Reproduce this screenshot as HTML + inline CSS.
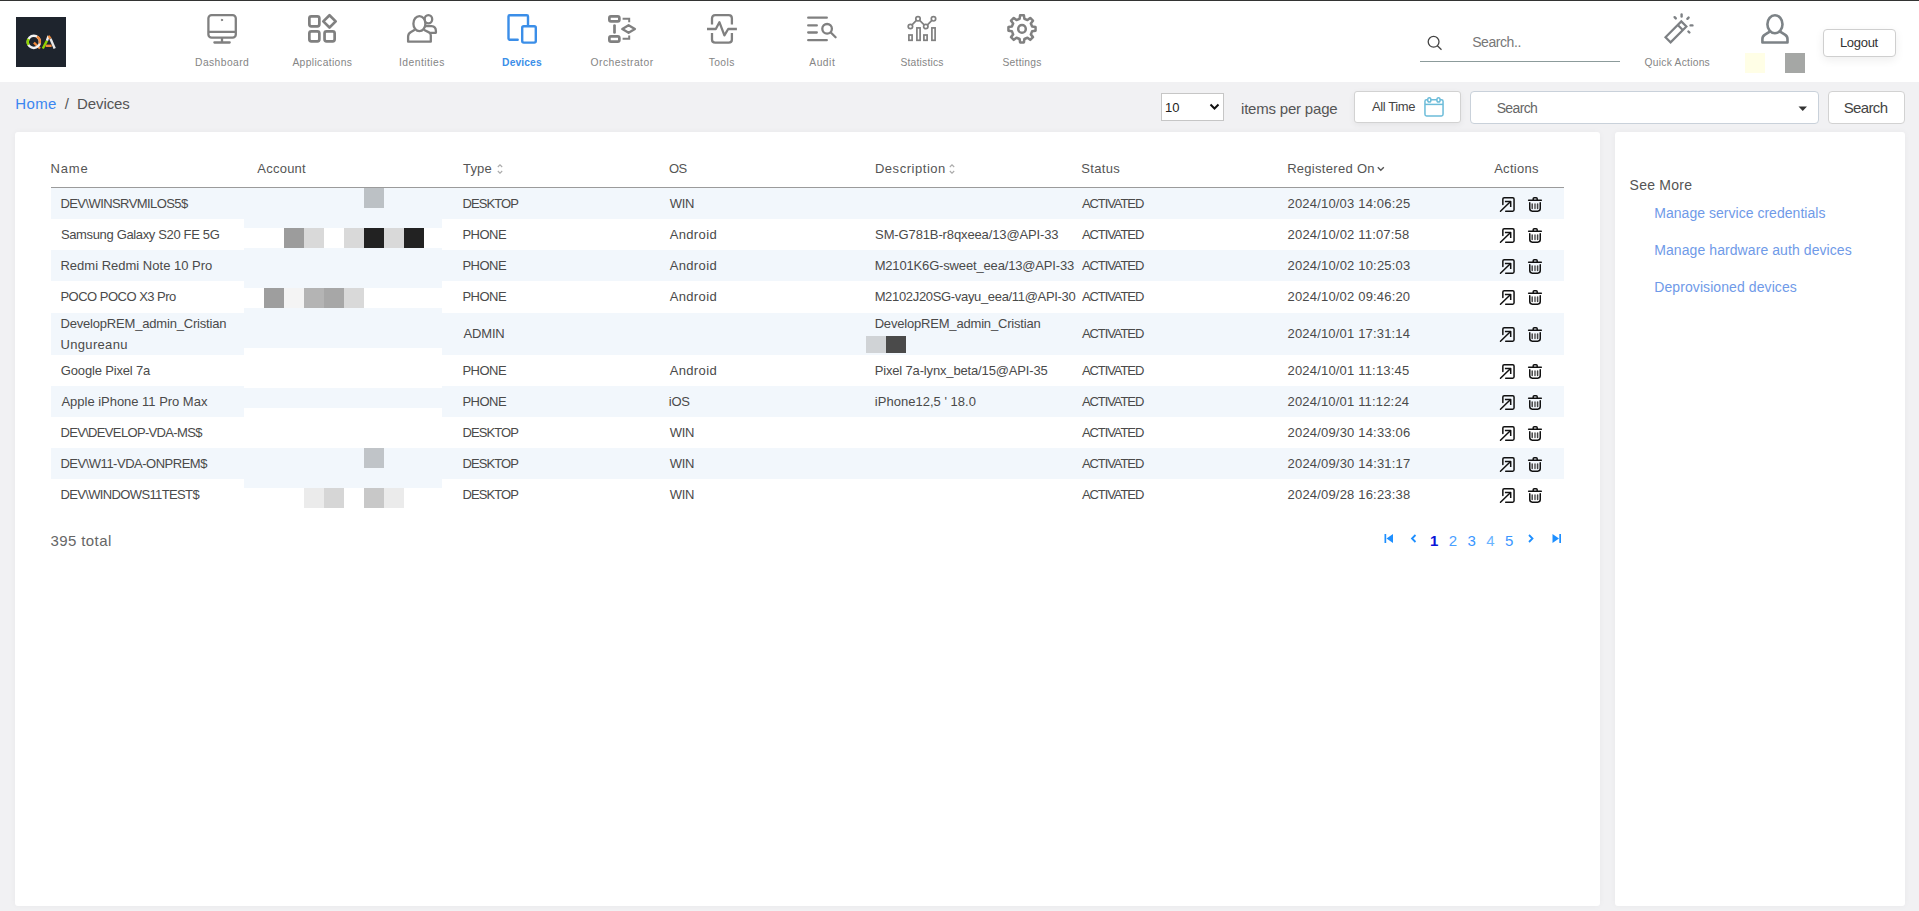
<!DOCTYPE html>
<html><head><meta charset="utf-8"><title>Devices</title>
<style>
*{box-sizing:border-box;margin:0;padding:0}
html,body{width:1919px;height:911px;overflow:hidden}
body{background:#f1f1f3;font-family:"Liberation Sans",sans-serif;position:relative}
.a{position:absolute}
.t{position:absolute;white-space:nowrap;line-height:1}
svg{position:absolute;overflow:visible}
</style></head><body>

<div class="a" style="left:0;top:0;width:1919px;height:82px;background:#fff"></div>
<div class="a" style="left:0;top:0;width:1919px;height:1px;background:#333433"></div>
<div class="a" style="left:16px;top:17px;width:50px;height:50px;background:#1e242d"></div>
<svg style="left:16px;top:17px" width="50" height="50" viewBox="0 0 50 50">
<g fill="none" stroke-width="2.4" stroke-linecap="butt">
<path d="M17.9 25.7 L24 31.5" stroke="#f08a3c"/>
<circle cx="17.8" cy="24.9" r="6.1" stroke="#f2f2f2"/>
<path d="M12.52 21.85 A6.1 6.1 0 0 0 12.52 27.95" stroke="#8fd400"/>
<path d="M20.85 19.62 A6.1 6.1 0 0 1 23.69 26.48" stroke="#f08a3c"/>
<path d="M26.8 31.5 L31 23.6" stroke="#8fd400"/>
<path d="M31 23.6 L32.6 18.8" stroke="#f2f2f2"/>
<path d="M32.6 18.8 L34.5 21.7" stroke="#f08a3c"/>
<path d="M34.5 21.7 L38.7 31.5" stroke="#e8e8e8"/>
<path d="M29.7 28.8 L35.6 28.8" stroke="#f08a3c"/>
</g></svg>
<svg style="left:222px;top:13px" width="1" height="1"><g fill="none" stroke="#808080" stroke-width="2.3" stroke-linecap="round"><rect x="-13.6" y="2.1" width="27.4" height="22.6" rx="3.2"/><line x1="-13" y1="18.9" x2="13" y2="18.9"/><line x1="0" y1="25.5" x2="0" y2="28.8"/><line x1="-7.6" y1="29.5" x2="7.7" y2="29.5"/><circle cx="-0.1" cy="7" r="0.7" fill="#808080" stroke-width="1"/></g></svg>
<div class="t" style="left:195.06px;top:57.88px;font-size:10.3px;color:#858585;letter-spacing:0.415px;font-weight:normal;">Dashboard</div>
<svg style="left:322px;top:13px" width="1" height="1"><g fill="none" stroke="#808080" stroke-width="2.7" stroke-linejoin="round"><rect x="-12.65" y="3.35" width="10" height="10" rx="2"/><rect x="-12.65" y="18.35" width="10" height="10" rx="2"/><rect x="2.55" y="18.35" width="10.1" height="10" rx="2"/><path d="M7.5 2.2 L13.7 8.35 L7.5 14.5 L1.3 8.35 Z"/></g></svg>
<div class="t" style="left:292.38px;top:57.88px;font-size:10.3px;color:#858585;letter-spacing:0.369px;font-weight:normal;">Applications</div>
<svg style="left:422px;top:13px" width="1" height="1"><g stroke="#808080" stroke-width="2.3" stroke-linejoin="round" fill="#fff"><ellipse cx="6.4" cy="6.2" rx="3.8" ry="4.1"/><path d="M2 13.2 L9.5 13.2 Q13.9 13.6 13.9 18 L13.9 19.8 L3 19.8"/><path d="M-7.2 16.8 L-11 18.9 Q-13.9 20.5 -13.9 23.5 L-13.9 28.7 L8.8 28.7 L8.8 22.2 Q8.8 20.4 7 19.4 L1.8 16.8"/><ellipse cx="-2.6" cy="10.65" rx="6" ry="7.55"/></g></svg>
<div class="t" style="left:398.95px;top:57.88px;font-size:10.3px;color:#858585;letter-spacing:0.478px;font-weight:normal;">Identities</div>
<svg style="left:522px;top:13px" width="1" height="1"><g fill="none" stroke="#3b8ee8" stroke-width="2.4" stroke-linecap="round" stroke-linejoin="round"><path d="M-4.3 26.8 L-12.3 26.8 Q-13.5 26.8 -13.5 25.6 L-13.5 3.4 Q-13.5 2.2 -12.3 2.2 L4.8 2.2 Q6 2.2 6 3.4 L6 12.8"/><rect x="0.2" y="13.2" width="13.6" height="16.4" rx="1.6"/></g></svg>
<div class="t" style="left:502.11px;top:57.88px;font-size:10.3px;color:#3b8ee8;letter-spacing:0.095px;font-weight:bold;">Devices</div>
<svg style="left:622px;top:13px" width="1" height="1"><g fill="none" stroke="#808080" stroke-width="2.7" stroke-linecap="round" stroke-linejoin="round"><rect x="-12.65" y="3.35" width="10" height="5.1" rx="1.6"/><rect x="-12.65" y="23.45" width="10" height="5.1" rx="1.6"/><line x1="-7.5" y1="12.6" x2="-7.5" y2="19.5"/><path d="M0.3 16 L6.6 12.3 L12.9 16 L6.6 19.7 Z" stroke-width="2.4"/><path d="M0.6 5.8 L7.2 5.8 L7.2 9.3" stroke-linecap="butt" stroke-linejoin="miter" stroke-width="2"/><path d="M0.6 25.8 L7.2 25.8 L7.2 22.4" stroke-linecap="butt" stroke-linejoin="miter" stroke-width="2"/></g></svg>
<div class="t" style="left:590.61px;top:57.88px;font-size:10.3px;color:#858585;letter-spacing:0.475px;font-weight:normal;">Orchestrator</div>
<svg style="left:722px;top:13px" width="1" height="1"><g fill="none" stroke="#808080" stroke-width="2.3" stroke-linejoin="round"><path d="M-10 11.6 L-10 5.4 Q-10 2.15 -6.8 2.15 L6.7 2.15 Q9.9 2.15 9.9 5.4 L9.9 11.6"/><path d="M-10 20 L-10 26.4 Q-10 29.65 -6.8 29.65 L6.7 29.65 Q9.9 29.65 9.9 26.4 L9.9 20"/><path d="M-15 16 L-6.2 16 L-2.6 9.2 L2.4 22.4 L6.2 16 L14.9 16"/></g></svg>
<div class="t" style="left:708.67px;top:57.88px;font-size:10.3px;color:#858585;letter-spacing:0.404px;font-weight:normal;">Tools</div>
<svg style="left:822px;top:13px" width="1" height="1"><g fill="none" stroke="#808080" stroke-width="2.3" stroke-linecap="round"><line x1="-13.8" y1="4.7" x2="4.8" y2="4.7"/><line x1="-13.8" y1="12.4" x2="-5.2" y2="12.4"/><line x1="-13.8" y1="19.5" x2="-5.2" y2="19.5"/><line x1="-13.8" y1="27.2" x2="4.8" y2="27.2"/><circle cx="5.1" cy="15.8" r="4.8"/><line x1="8.8" y1="19.5" x2="13.6" y2="24.3"/></g></svg>
<div class="t" style="left:809.28px;top:57.88px;font-size:10.3px;color:#858585;letter-spacing:0.505px;font-weight:normal;">Audit</div>
<svg style="left:922px;top:13px" width="1" height="1"><g fill="none" stroke="#808080" stroke-width="1.7"><rect x="-13.1" y="22" width="3.2" height="5.3"/><rect x="-5.1" y="14.9" width="3.2" height="12.4"/><rect x="1.9" y="22" width="3.2" height="5.3"/><rect x="9.9" y="14.9" width="3.2" height="12.4"/><circle cx="-11.6" cy="13.5" r="2.2"/><circle cx="-4" cy="5.8" r="2.2"/><circle cx="3.8" cy="13.5" r="2.2"/><circle cx="11.5" cy="5.8" r="2.2"/><path d="M-10.2 12.1 L-5.4 7.2 M-2.6 7.2 L2.4 12.1 M5.2 12.1 L10.1 7.2"/></g></svg>
<div class="t" style="left:900.43px;top:57.88px;font-size:10.3px;color:#858585;letter-spacing:0.203px;font-weight:normal;">Statistics</div>
<svg style="left:1022px;top:13px" width="1" height="1"><g fill="none" stroke="#808080" stroke-width="2.5" stroke-linejoin="round"><path d="M10.12 13.52 L13.56 13.97 L13.56 17.83 L10.12 18.28 L8.84 21.38 L10.96 24.13 L8.23 26.86 L5.48 24.74 L2.38 26.02 L1.93 29.46 L-1.93 29.46 L-2.38 26.02 L-5.48 24.74 L-8.23 26.86 L-10.96 24.13 L-8.84 21.38 L-10.12 18.28 L-13.56 17.83 L-13.56 13.97 L-10.12 13.52 L-8.84 10.42 L-10.96 7.67 L-8.23 4.94 L-5.48 7.06 L-2.38 5.78 L-1.93 2.34 L1.93 2.34 L2.38 5.78 L5.48 7.06 L8.23 4.94 L10.96 7.67 L8.84 10.42Z"/><circle cx="0" cy="15.9" r="3.8"/></g></svg>
<div class="t" style="left:1002.43px;top:57.88px;font-size:10.3px;color:#858585;letter-spacing:0.26px;font-weight:normal;">Settings</div>
<svg style="left:1427px;top:35px" width="16" height="16" viewBox="0 0 16 16"><circle cx="6.6" cy="6.8" r="5.4" fill="none" stroke="#444" stroke-width="1.3"/><line x1="10.4" y1="10.8" x2="14.5" y2="14.8" stroke="#444" stroke-width="1.3"/></svg>
<div class="t" style="left:1472.16px;top:35.35px;font-size:14px;color:#777;letter-spacing:-0.432px;font-weight:normal;">Search..</div>
<div class="a" style="left:1420px;top:60.5px;width:200px;height:1px;background:#8c9b9b"></div>
<svg style="left:1660px;top:10px" width="40" height="40" viewBox="0 0 40 40">
<g fill="none" stroke="#7d8084" stroke-width="2.2" stroke-linejoin="miter">
<path d="M5.5 27.3 L21.3 11.4 L26.4 16.5 L10.6 32.4 Z"/>
<line x1="17.8" y1="15" x2="22.8" y2="20"/>
</g>
<g stroke="#7d8084" stroke-width="2.4" stroke-linecap="round">
<line x1="21.6" y1="4.4" x2="21.6" y2="6.6"/>
<line x1="14.6" y1="7.2" x2="15.8" y2="8.4"/>
<line x1="28.6" y1="7.6" x2="27.4" y2="8.8"/>
<line x1="30.6" y1="15.4" x2="32.4" y2="15.4"/>
<line x1="28.4" y1="21.5" x2="29.4" y2="22.5"/>
</g></svg>
<div class="t" style="left:1644.51px;top:57.88px;font-size:10.3px;color:#858585;letter-spacing:0.241px;font-weight:normal;">Quick Actions</div>
<svg style="left:1760px;top:13px" width="32" height="32" viewBox="0 0 32 32">
<g fill="none" stroke="#7d8387" stroke-width="2.6" stroke-linejoin="round">
<path d="M10.2 18.4 L5 21.6 Q2.4 23.2 2.4 26 L2.4 29.5 L27.5 29.5 L27.5 26 Q27.5 23.2 24.9 21.6 L19.7 18.4"/>
<ellipse cx="14.95" cy="11.3" rx="7.55" ry="9"/>
</g></svg>
<div class="a" style="left:1745px;top:53px;width:20px;height:20px;background:#fffee6"></div>
<div class="a" style="left:1785px;top:53px;width:20px;height:20px;background:#a5a7a5"></div>
<div class="a" style="left:1823px;top:29px;width:73px;height:28px;background:#fff;border:1px solid #cfcfcf;border-radius:4px;box-shadow:0 3px 10px rgba(0,0,0,0.07)"></div>
<div class="t" style="left:1839.93px;top:36.00px;font-size:13px;color:#333;letter-spacing:-0.3px;font-weight:normal;">Logout</div>
<div class="t" style="left:15.27px;top:95.90px;font-size:15px;color:#3b86f0;letter-spacing:0.395px;font-weight:normal;">Home</div>
<div class="t" style="left:64.80px;top:95.90px;font-size:15px;color:#555;letter-spacing:0px;font-weight:normal;">/</div>
<div class="t" style="left:76.97px;top:95.90px;font-size:15px;color:#555;letter-spacing:-0.08px;font-weight:normal;">Devices</div>
<div class="a" style="left:1161px;top:93px;width:63px;height:28px;background:#fff;border:1px solid #c6c6c6"></div>
<div class="t" style="left:1165.01px;top:101.00px;font-size:13px;color:#222;letter-spacing:0px;font-weight:normal;">10</div>
<svg style="left:1209px;top:103px" width="12" height="8" viewBox="0 0 12 8"><path d="M1.5 1.5 L5.5 5.5 L9.5 1.5" fill="none" stroke="#111" stroke-width="2"/></svg>
<div class="t" style="left:1241.00px;top:100.80px;font-size:15px;color:#555;letter-spacing:-0.2px;font-weight:normal;">items per page</div>
<div class="a" style="left:1354px;top:91px;width:107px;height:32px;background:#fff;border:1px solid #d2d2d2;border-radius:3px;box-shadow:0 2px 6px rgba(0,0,0,0.06)"></div>
<div class="t" style="left:1371.97px;top:100.40px;font-size:13px;color:#444;letter-spacing:-0.4px;font-weight:normal;">All Time</div>
<svg style="left:1423px;top:96px" width="22" height="22" viewBox="0 0 22 22"><g fill="none" stroke="#6cbcd9" stroke-width="1.5"><rect x="1.95" y="3.65" width="18.1" height="16.3" rx="1.6"/><line x1="1.95" y1="8.4" x2="20.05" y2="8.4"/><ellipse cx="6.3" cy="3.9" rx="1.6" ry="2.2" fill="#fff"/><ellipse cx="15.5" cy="3.9" rx="1.6" ry="2.2" fill="#fff"/></g></svg>
<div class="a" style="left:1469.5px;top:91px;width:349px;height:32.5px;background:#fff;border:1px solid #c9d1da;border-radius:4px"></div>
<div class="t" style="left:1496.66px;top:101.45px;font-size:14px;color:#666;letter-spacing:-0.623px;font-weight:normal;">Search</div>
<svg style="left:1797.5px;top:106.2px" width="10" height="6" viewBox="0 0 10 6"><path d="M0.5 0.5 L9 0.5 L4.75 5 Z" fill="#333"/></svg>
<div class="a" style="left:1827.5px;top:91px;width:77px;height:32.5px;background:#fff;border:1px solid #d2d2d2;border-radius:4px"></div>
<div class="t" style="left:1843.72px;top:99.80px;font-size:15px;color:#444;letter-spacing:-0.654px;font-weight:normal;">Search</div>
<div class="a" style="left:15px;top:132px;width:1585px;height:774px;background:#fff;border-radius:3px;box-shadow:0 0 6px rgba(0,0,0,0.04)"></div>
<div class="a" style="left:1615px;top:132px;width:290px;height:774px;background:#fff;border-radius:3px;box-shadow:0 0 6px rgba(0,0,0,0.04)"></div>
<div class="t" style="left:50.43px;top:162.00px;font-size:13px;color:#555;letter-spacing:0.856px;font-weight:normal;">Name</div>
<div class="t" style="left:257.37px;top:162.00px;font-size:13px;color:#555;letter-spacing:0.225px;font-weight:normal;">Account</div>
<div class="t" style="left:463.01px;top:162.00px;font-size:13px;color:#555;letter-spacing:0.19px;font-weight:normal;">Type</div>
<div class="t" style="left:669.08px;top:162.00px;font-size:13px;color:#555;letter-spacing:-0.67px;font-weight:normal;">OS</div>
<div class="t" style="left:874.93px;top:162.00px;font-size:13px;color:#555;letter-spacing:0.539px;font-weight:normal;">Description</div>
<div class="t" style="left:1081.31px;top:162.00px;font-size:13px;color:#555;letter-spacing:0.301px;font-weight:normal;">Status</div>
<div class="t" style="left:1287.13px;top:162.00px;font-size:13px;color:#555;letter-spacing:0.299px;font-weight:normal;">Registered On</div>
<div class="t" style="left:1494.17px;top:162.00px;font-size:13px;color:#555;letter-spacing:0.277px;font-weight:normal;">Actions</div>
<svg style="left:497px;top:164px" width="6" height="10" viewBox="0 0 6 10"><path d="M0.8 3 L3 0.8 L5.2 3 M0.8 7 L3 9.2 L5.2 7" fill="none" stroke="#aaa" stroke-width="1.1"/></svg>
<svg style="left:949px;top:164px" width="6" height="10" viewBox="0 0 6 10"><path d="M0.8 3 L3 0.8 L5.2 3 M0.8 7 L3 9.2 L5.2 7" fill="none" stroke="#aaa" stroke-width="1.1"/></svg>
<svg style="left:1377px;top:166px" width="8" height="6" viewBox="0 0 8 6"><path d="M0.8 1.2 L3.8 4.2 L6.8 1.2" fill="none" stroke="#555" stroke-width="1.4"/></svg>
<div class="a" style="left:51px;top:187px;width:1513px;height:1px;background:#9b9b9b"></div>
<div class="a" style="left:51px;top:188px;width:1513px;height:31px;background:#f2f7fc"></div>
<div class="a" style="left:51px;top:250px;width:1513px;height:31px;background:#f2f7fc"></div>
<div class="a" style="left:51px;top:313px;width:1513px;height:42px;background:#f2f7fc"></div>
<div class="a" style="left:51px;top:386px;width:1513px;height:31px;background:#f2f7fc"></div>
<div class="a" style="left:51px;top:448px;width:1513px;height:31px;background:#f2f7fc"></div>
<div class="t" style="left:60.43px;top:197.00px;font-size:13px;color:#4a4a4a;letter-spacing:-0.58px;font-weight:normal;">DEV\WINSRVMILOS5$</div>
<div class="t" style="left:462.43px;top:197.00px;font-size:13px;color:#4a4a4a;letter-spacing:-0.895px;font-weight:normal;">DESKTOP</div>
<div class="t" style="left:669.64px;top:197.00px;font-size:13px;color:#4a4a4a;letter-spacing:-0.226px;font-weight:normal;">WIN</div>
<div class="t" style="left:1081.97px;top:197.00px;font-size:13px;color:#4a4a4a;letter-spacing:-1.088px;font-weight:normal;">ACTIVATED</div>
<div class="t" style="left:1287.55px;top:197.00px;font-size:13px;color:#4a4a4a;letter-spacing:0.184px;font-weight:normal;">2024/10/03 14:06:25</div>
<svg style="left:1499px;top:196px" width="17" height="17" viewBox="0 0 17 17"><g fill="none" stroke="#111" stroke-width="1.5" stroke-linecap="round" stroke-linejoin="round"><path d="M3.85 8.4 L3.85 3.1 Q3.85 1.75 5.2 1.75 L13.7 1.75 Q15.05 1.75 15.05 3.1 L15.05 13.8 Q15.05 15.15 13.7 15.15 L6.7 15.15"/><path d="M1.5 15.3 L11.3 5.8"/><path d="M5.9 5.4 L11.7 5.4 L11.7 11" stroke-linecap="butt"/></g></svg>
<svg style="left:1527px;top:196px" width="17" height="17" viewBox="0 0 17 17"><g fill="none" stroke="#111" stroke-width="1.5" stroke-linecap="round"><line x1="1.6" y1="4.3" x2="14.3" y2="4.3"/><path d="M6.2 4.2 L6.2 2.8 Q6.2 1.75 7.2 1.75 L9.2 1.75 Q10.2 1.75 10.2 2.8 L10.2 4.2"/><path d="M2.75 6.8 L2.75 12.6 Q2.75 15.15 5.3 15.15 L10.7 15.15 Q13.25 15.15 13.25 12.6 L13.25 6.8"/><line x1="5.2" y1="7.9" x2="5.2" y2="12.5" stroke="#444"/><line x1="8" y1="7.9" x2="8" y2="12.5" stroke="#555"/><line x1="10.6" y1="7.9" x2="10.6" y2="12.5" stroke="#444"/></g></svg>
<div class="t" style="left:60.91px;top:228.00px;font-size:13px;color:#4a4a4a;letter-spacing:-0.35px;font-weight:normal;">Samsung Galaxy S20 FE 5G</div>
<div class="t" style="left:875.11px;top:228.00px;font-size:13px;color:#4a4a4a;letter-spacing:-0.126px;font-weight:normal;">SM-G781B-r8qxeea/13@API-33</div>
<div class="t" style="left:462.43px;top:228.00px;font-size:13px;color:#4a4a4a;letter-spacing:-0.501px;font-weight:normal;">PHONE</div>
<div class="t" style="left:669.67px;top:228.00px;font-size:13px;color:#4a4a4a;letter-spacing:0.359px;font-weight:normal;">Android</div>
<div class="t" style="left:1081.97px;top:228.00px;font-size:13px;color:#4a4a4a;letter-spacing:-1.088px;font-weight:normal;">ACTIVATED</div>
<div class="t" style="left:1287.55px;top:228.00px;font-size:13px;color:#4a4a4a;letter-spacing:0.186px;font-weight:normal;">2024/10/02 11:07:58</div>
<svg style="left:1499px;top:227px" width="17" height="17" viewBox="0 0 17 17"><g fill="none" stroke="#111" stroke-width="1.5" stroke-linecap="round" stroke-linejoin="round"><path d="M3.85 8.4 L3.85 3.1 Q3.85 1.75 5.2 1.75 L13.7 1.75 Q15.05 1.75 15.05 3.1 L15.05 13.8 Q15.05 15.15 13.7 15.15 L6.7 15.15"/><path d="M1.5 15.3 L11.3 5.8"/><path d="M5.9 5.4 L11.7 5.4 L11.7 11" stroke-linecap="butt"/></g></svg>
<svg style="left:1527px;top:227px" width="17" height="17" viewBox="0 0 17 17"><g fill="none" stroke="#111" stroke-width="1.5" stroke-linecap="round"><line x1="1.6" y1="4.3" x2="14.3" y2="4.3"/><path d="M6.2 4.2 L6.2 2.8 Q6.2 1.75 7.2 1.75 L9.2 1.75 Q10.2 1.75 10.2 2.8 L10.2 4.2"/><path d="M2.75 6.8 L2.75 12.6 Q2.75 15.15 5.3 15.15 L10.7 15.15 Q13.25 15.15 13.25 12.6 L13.25 6.8"/><line x1="5.2" y1="7.9" x2="5.2" y2="12.5" stroke="#444"/><line x1="8" y1="7.9" x2="8" y2="12.5" stroke="#555"/><line x1="10.6" y1="7.9" x2="10.6" y2="12.5" stroke="#444"/></g></svg>
<div class="t" style="left:60.43px;top:259.00px;font-size:13px;color:#4a4a4a;letter-spacing:0.008px;font-weight:normal;">Redmi Redmi Note 10 Pro</div>
<div class="t" style="left:874.63px;top:259.00px;font-size:13px;color:#4a4a4a;letter-spacing:-0.161px;font-weight:normal;">M2101K6G-sweet_eea/13@API-33</div>
<div class="t" style="left:462.43px;top:259.00px;font-size:13px;color:#4a4a4a;letter-spacing:-0.501px;font-weight:normal;">PHONE</div>
<div class="t" style="left:669.67px;top:259.00px;font-size:13px;color:#4a4a4a;letter-spacing:0.359px;font-weight:normal;">Android</div>
<div class="t" style="left:1081.97px;top:259.00px;font-size:13px;color:#4a4a4a;letter-spacing:-1.088px;font-weight:normal;">ACTIVATED</div>
<div class="t" style="left:1287.55px;top:259.00px;font-size:13px;color:#4a4a4a;letter-spacing:0.186px;font-weight:normal;">2024/10/02 10:25:03</div>
<svg style="left:1499px;top:258px" width="17" height="17" viewBox="0 0 17 17"><g fill="none" stroke="#111" stroke-width="1.5" stroke-linecap="round" stroke-linejoin="round"><path d="M3.85 8.4 L3.85 3.1 Q3.85 1.75 5.2 1.75 L13.7 1.75 Q15.05 1.75 15.05 3.1 L15.05 13.8 Q15.05 15.15 13.7 15.15 L6.7 15.15"/><path d="M1.5 15.3 L11.3 5.8"/><path d="M5.9 5.4 L11.7 5.4 L11.7 11" stroke-linecap="butt"/></g></svg>
<svg style="left:1527px;top:258px" width="17" height="17" viewBox="0 0 17 17"><g fill="none" stroke="#111" stroke-width="1.5" stroke-linecap="round"><line x1="1.6" y1="4.3" x2="14.3" y2="4.3"/><path d="M6.2 4.2 L6.2 2.8 Q6.2 1.75 7.2 1.75 L9.2 1.75 Q10.2 1.75 10.2 2.8 L10.2 4.2"/><path d="M2.75 6.8 L2.75 12.6 Q2.75 15.15 5.3 15.15 L10.7 15.15 Q13.25 15.15 13.25 12.6 L13.25 6.8"/><line x1="5.2" y1="7.9" x2="5.2" y2="12.5" stroke="#444"/><line x1="8" y1="7.9" x2="8" y2="12.5" stroke="#555"/><line x1="10.6" y1="7.9" x2="10.6" y2="12.5" stroke="#444"/></g></svg>
<div class="t" style="left:60.43px;top:290.00px;font-size:13px;color:#4a4a4a;letter-spacing:-0.508px;font-weight:normal;">POCO POCO X3 Pro</div>
<div class="t" style="left:874.63px;top:290.00px;font-size:13px;color:#4a4a4a;letter-spacing:-0.33px;font-weight:normal;">M2102J20SG-vayu_eea/11@API-30</div>
<div class="t" style="left:462.43px;top:290.00px;font-size:13px;color:#4a4a4a;letter-spacing:-0.501px;font-weight:normal;">PHONE</div>
<div class="t" style="left:669.67px;top:290.00px;font-size:13px;color:#4a4a4a;letter-spacing:0.359px;font-weight:normal;">Android</div>
<div class="t" style="left:1081.97px;top:290.00px;font-size:13px;color:#4a4a4a;letter-spacing:-1.088px;font-weight:normal;">ACTIVATED</div>
<div class="t" style="left:1287.55px;top:290.00px;font-size:13px;color:#4a4a4a;letter-spacing:0.182px;font-weight:normal;">2024/10/02 09:46:20</div>
<svg style="left:1499px;top:289px" width="17" height="17" viewBox="0 0 17 17"><g fill="none" stroke="#111" stroke-width="1.5" stroke-linecap="round" stroke-linejoin="round"><path d="M3.85 8.4 L3.85 3.1 Q3.85 1.75 5.2 1.75 L13.7 1.75 Q15.05 1.75 15.05 3.1 L15.05 13.8 Q15.05 15.15 13.7 15.15 L6.7 15.15"/><path d="M1.5 15.3 L11.3 5.8"/><path d="M5.9 5.4 L11.7 5.4 L11.7 11" stroke-linecap="butt"/></g></svg>
<svg style="left:1527px;top:289px" width="17" height="17" viewBox="0 0 17 17"><g fill="none" stroke="#111" stroke-width="1.5" stroke-linecap="round"><line x1="1.6" y1="4.3" x2="14.3" y2="4.3"/><path d="M6.2 4.2 L6.2 2.8 Q6.2 1.75 7.2 1.75 L9.2 1.75 Q10.2 1.75 10.2 2.8 L10.2 4.2"/><path d="M2.75 6.8 L2.75 12.6 Q2.75 15.15 5.3 15.15 L10.7 15.15 Q13.25 15.15 13.25 12.6 L13.25 6.8"/><line x1="5.2" y1="7.9" x2="5.2" y2="12.5" stroke="#444"/><line x1="8" y1="7.9" x2="8" y2="12.5" stroke="#555"/><line x1="10.6" y1="7.9" x2="10.6" y2="12.5" stroke="#444"/></g></svg>
<div class="t" style="left:60.43px;top:317.00px;font-size:13px;color:#4a4a4a;letter-spacing:-0.184px;font-weight:normal;">DevelopREM_admin_Cristian</div>
<div class="t" style="left:60.50px;top:337.70px;font-size:13px;color:#4a4a4a;letter-spacing:0.33px;font-weight:normal;">Ungureanu</div>
<div class="t" style="left:874.63px;top:317.00px;font-size:13px;color:#4a4a4a;letter-spacing:-0.184px;font-weight:normal;">DevelopREM_admin_Cristian</div>
<div class="t" style="left:463.47px;top:327.00px;font-size:13px;color:#4a4a4a;letter-spacing:-0.151px;font-weight:normal;">ADMIN</div>
<div class="t" style="left:1081.97px;top:327.00px;font-size:13px;color:#4a4a4a;letter-spacing:-1.088px;font-weight:normal;">ACTIVATED</div>
<div class="t" style="left:1287.55px;top:327.00px;font-size:13px;color:#4a4a4a;letter-spacing:0.175px;font-weight:normal;">2024/10/01 17:31:14</div>
<svg style="left:1499px;top:326px" width="17" height="17" viewBox="0 0 17 17"><g fill="none" stroke="#111" stroke-width="1.5" stroke-linecap="round" stroke-linejoin="round"><path d="M3.85 8.4 L3.85 3.1 Q3.85 1.75 5.2 1.75 L13.7 1.75 Q15.05 1.75 15.05 3.1 L15.05 13.8 Q15.05 15.15 13.7 15.15 L6.7 15.15"/><path d="M1.5 15.3 L11.3 5.8"/><path d="M5.9 5.4 L11.7 5.4 L11.7 11" stroke-linecap="butt"/></g></svg>
<svg style="left:1527px;top:326px" width="17" height="17" viewBox="0 0 17 17"><g fill="none" stroke="#111" stroke-width="1.5" stroke-linecap="round"><line x1="1.6" y1="4.3" x2="14.3" y2="4.3"/><path d="M6.2 4.2 L6.2 2.8 Q6.2 1.75 7.2 1.75 L9.2 1.75 Q10.2 1.75 10.2 2.8 L10.2 4.2"/><path d="M2.75 6.8 L2.75 12.6 Q2.75 15.15 5.3 15.15 L10.7 15.15 Q13.25 15.15 13.25 12.6 L13.25 6.8"/><line x1="5.2" y1="7.9" x2="5.2" y2="12.5" stroke="#444"/><line x1="8" y1="7.9" x2="8" y2="12.5" stroke="#555"/><line x1="10.6" y1="7.9" x2="10.6" y2="12.5" stroke="#444"/></g></svg>
<div class="t" style="left:60.85px;top:364.00px;font-size:13px;color:#4a4a4a;letter-spacing:-0.173px;font-weight:normal;">Google Pixel 7a</div>
<div class="t" style="left:874.63px;top:364.00px;font-size:13px;color:#4a4a4a;letter-spacing:-0.153px;font-weight:normal;">Pixel 7a-lynx_beta/15@API-35</div>
<div class="t" style="left:462.43px;top:364.00px;font-size:13px;color:#4a4a4a;letter-spacing:-0.501px;font-weight:normal;">PHONE</div>
<div class="t" style="left:669.67px;top:364.00px;font-size:13px;color:#4a4a4a;letter-spacing:0.359px;font-weight:normal;">Android</div>
<div class="t" style="left:1081.97px;top:364.00px;font-size:13px;color:#4a4a4a;letter-spacing:-1.088px;font-weight:normal;">ACTIVATED</div>
<div class="t" style="left:1287.55px;top:364.00px;font-size:13px;color:#4a4a4a;letter-spacing:0.184px;font-weight:normal;">2024/10/01 11:13:45</div>
<svg style="left:1499px;top:363px" width="17" height="17" viewBox="0 0 17 17"><g fill="none" stroke="#111" stroke-width="1.5" stroke-linecap="round" stroke-linejoin="round"><path d="M3.85 8.4 L3.85 3.1 Q3.85 1.75 5.2 1.75 L13.7 1.75 Q15.05 1.75 15.05 3.1 L15.05 13.8 Q15.05 15.15 13.7 15.15 L6.7 15.15"/><path d="M1.5 15.3 L11.3 5.8"/><path d="M5.9 5.4 L11.7 5.4 L11.7 11" stroke-linecap="butt"/></g></svg>
<svg style="left:1527px;top:363px" width="17" height="17" viewBox="0 0 17 17"><g fill="none" stroke="#111" stroke-width="1.5" stroke-linecap="round"><line x1="1.6" y1="4.3" x2="14.3" y2="4.3"/><path d="M6.2 4.2 L6.2 2.8 Q6.2 1.75 7.2 1.75 L9.2 1.75 Q10.2 1.75 10.2 2.8 L10.2 4.2"/><path d="M2.75 6.8 L2.75 12.6 Q2.75 15.15 5.3 15.15 L10.7 15.15 Q13.25 15.15 13.25 12.6 L13.25 6.8"/><line x1="5.2" y1="7.9" x2="5.2" y2="12.5" stroke="#444"/><line x1="8" y1="7.9" x2="8" y2="12.5" stroke="#555"/><line x1="10.6" y1="7.9" x2="10.6" y2="12.5" stroke="#444"/></g></svg>
<div class="t" style="left:61.47px;top:395.00px;font-size:13px;color:#4a4a4a;letter-spacing:-0.025px;font-weight:normal;">Apple iPhone 11 Pro Max</div>
<div class="t" style="left:874.83px;top:395.00px;font-size:13px;color:#4a4a4a;letter-spacing:0.018px;font-weight:normal;">iPhone12,5 ' 18.0</div>
<div class="t" style="left:462.43px;top:395.00px;font-size:13px;color:#4a4a4a;letter-spacing:-0.501px;font-weight:normal;">PHONE</div>
<div class="t" style="left:668.83px;top:395.00px;font-size:13px;color:#4a4a4a;letter-spacing:-0.302px;font-weight:normal;">iOS</div>
<div class="t" style="left:1081.97px;top:395.00px;font-size:13px;color:#4a4a4a;letter-spacing:-1.088px;font-weight:normal;">ACTIVATED</div>
<div class="t" style="left:1287.55px;top:395.00px;font-size:13px;color:#4a4a4a;letter-spacing:0.175px;font-weight:normal;">2024/10/01 11:12:24</div>
<svg style="left:1499px;top:394px" width="17" height="17" viewBox="0 0 17 17"><g fill="none" stroke="#111" stroke-width="1.5" stroke-linecap="round" stroke-linejoin="round"><path d="M3.85 8.4 L3.85 3.1 Q3.85 1.75 5.2 1.75 L13.7 1.75 Q15.05 1.75 15.05 3.1 L15.05 13.8 Q15.05 15.15 13.7 15.15 L6.7 15.15"/><path d="M1.5 15.3 L11.3 5.8"/><path d="M5.9 5.4 L11.7 5.4 L11.7 11" stroke-linecap="butt"/></g></svg>
<svg style="left:1527px;top:394px" width="17" height="17" viewBox="0 0 17 17"><g fill="none" stroke="#111" stroke-width="1.5" stroke-linecap="round"><line x1="1.6" y1="4.3" x2="14.3" y2="4.3"/><path d="M6.2 4.2 L6.2 2.8 Q6.2 1.75 7.2 1.75 L9.2 1.75 Q10.2 1.75 10.2 2.8 L10.2 4.2"/><path d="M2.75 6.8 L2.75 12.6 Q2.75 15.15 5.3 15.15 L10.7 15.15 Q13.25 15.15 13.25 12.6 L13.25 6.8"/><line x1="5.2" y1="7.9" x2="5.2" y2="12.5" stroke="#444"/><line x1="8" y1="7.9" x2="8" y2="12.5" stroke="#555"/><line x1="10.6" y1="7.9" x2="10.6" y2="12.5" stroke="#444"/></g></svg>
<div class="t" style="left:60.43px;top:426.00px;font-size:13px;color:#4a4a4a;letter-spacing:-0.661px;font-weight:normal;">DEV\DEVELOP-VDA-MS$</div>
<div class="t" style="left:462.43px;top:426.00px;font-size:13px;color:#4a4a4a;letter-spacing:-0.895px;font-weight:normal;">DESKTOP</div>
<div class="t" style="left:669.64px;top:426.00px;font-size:13px;color:#4a4a4a;letter-spacing:-0.226px;font-weight:normal;">WIN</div>
<div class="t" style="left:1081.97px;top:426.00px;font-size:13px;color:#4a4a4a;letter-spacing:-1.088px;font-weight:normal;">ACTIVATED</div>
<div class="t" style="left:1287.55px;top:426.00px;font-size:13px;color:#4a4a4a;letter-spacing:0.186px;font-weight:normal;">2024/09/30 14:33:06</div>
<svg style="left:1499px;top:425px" width="17" height="17" viewBox="0 0 17 17"><g fill="none" stroke="#111" stroke-width="1.5" stroke-linecap="round" stroke-linejoin="round"><path d="M3.85 8.4 L3.85 3.1 Q3.85 1.75 5.2 1.75 L13.7 1.75 Q15.05 1.75 15.05 3.1 L15.05 13.8 Q15.05 15.15 13.7 15.15 L6.7 15.15"/><path d="M1.5 15.3 L11.3 5.8"/><path d="M5.9 5.4 L11.7 5.4 L11.7 11" stroke-linecap="butt"/></g></svg>
<svg style="left:1527px;top:425px" width="17" height="17" viewBox="0 0 17 17"><g fill="none" stroke="#111" stroke-width="1.5" stroke-linecap="round"><line x1="1.6" y1="4.3" x2="14.3" y2="4.3"/><path d="M6.2 4.2 L6.2 2.8 Q6.2 1.75 7.2 1.75 L9.2 1.75 Q10.2 1.75 10.2 2.8 L10.2 4.2"/><path d="M2.75 6.8 L2.75 12.6 Q2.75 15.15 5.3 15.15 L10.7 15.15 Q13.25 15.15 13.25 12.6 L13.25 6.8"/><line x1="5.2" y1="7.9" x2="5.2" y2="12.5" stroke="#444"/><line x1="8" y1="7.9" x2="8" y2="12.5" stroke="#555"/><line x1="10.6" y1="7.9" x2="10.6" y2="12.5" stroke="#444"/></g></svg>
<div class="t" style="left:60.43px;top:457.00px;font-size:13px;color:#4a4a4a;letter-spacing:-0.487px;font-weight:normal;">DEV\W11-VDA-ONPREM$</div>
<div class="t" style="left:462.43px;top:457.00px;font-size:13px;color:#4a4a4a;letter-spacing:-0.895px;font-weight:normal;">DESKTOP</div>
<div class="t" style="left:669.64px;top:457.00px;font-size:13px;color:#4a4a4a;letter-spacing:-0.226px;font-weight:normal;">WIN</div>
<div class="t" style="left:1081.97px;top:457.00px;font-size:13px;color:#4a4a4a;letter-spacing:-1.088px;font-weight:normal;">ACTIVATED</div>
<div class="t" style="left:1287.55px;top:457.00px;font-size:13px;color:#4a4a4a;letter-spacing:0.19px;font-weight:normal;">2024/09/30 14:31:17</div>
<svg style="left:1499px;top:456px" width="17" height="17" viewBox="0 0 17 17"><g fill="none" stroke="#111" stroke-width="1.5" stroke-linecap="round" stroke-linejoin="round"><path d="M3.85 8.4 L3.85 3.1 Q3.85 1.75 5.2 1.75 L13.7 1.75 Q15.05 1.75 15.05 3.1 L15.05 13.8 Q15.05 15.15 13.7 15.15 L6.7 15.15"/><path d="M1.5 15.3 L11.3 5.8"/><path d="M5.9 5.4 L11.7 5.4 L11.7 11" stroke-linecap="butt"/></g></svg>
<svg style="left:1527px;top:456px" width="17" height="17" viewBox="0 0 17 17"><g fill="none" stroke="#111" stroke-width="1.5" stroke-linecap="round"><line x1="1.6" y1="4.3" x2="14.3" y2="4.3"/><path d="M6.2 4.2 L6.2 2.8 Q6.2 1.75 7.2 1.75 L9.2 1.75 Q10.2 1.75 10.2 2.8 L10.2 4.2"/><path d="M2.75 6.8 L2.75 12.6 Q2.75 15.15 5.3 15.15 L10.7 15.15 Q13.25 15.15 13.25 12.6 L13.25 6.8"/><line x1="5.2" y1="7.9" x2="5.2" y2="12.5" stroke="#444"/><line x1="8" y1="7.9" x2="8" y2="12.5" stroke="#555"/><line x1="10.6" y1="7.9" x2="10.6" y2="12.5" stroke="#444"/></g></svg>
<div class="t" style="left:60.43px;top:488.00px;font-size:13px;color:#4a4a4a;letter-spacing:-0.635px;font-weight:normal;">DEV\WINDOWS11TEST$</div>
<div class="t" style="left:462.43px;top:488.00px;font-size:13px;color:#4a4a4a;letter-spacing:-0.895px;font-weight:normal;">DESKTOP</div>
<div class="t" style="left:669.64px;top:488.00px;font-size:13px;color:#4a4a4a;letter-spacing:-0.226px;font-weight:normal;">WIN</div>
<div class="t" style="left:1081.97px;top:488.00px;font-size:13px;color:#4a4a4a;letter-spacing:-1.088px;font-weight:normal;">ACTIVATED</div>
<div class="t" style="left:1287.55px;top:488.00px;font-size:13px;color:#4a4a4a;letter-spacing:0.186px;font-weight:normal;">2024/09/28 16:23:38</div>
<svg style="left:1499px;top:487px" width="17" height="17" viewBox="0 0 17 17"><g fill="none" stroke="#111" stroke-width="1.5" stroke-linecap="round" stroke-linejoin="round"><path d="M3.85 8.4 L3.85 3.1 Q3.85 1.75 5.2 1.75 L13.7 1.75 Q15.05 1.75 15.05 3.1 L15.05 13.8 Q15.05 15.15 13.7 15.15 L6.7 15.15"/><path d="M1.5 15.3 L11.3 5.8"/><path d="M5.9 5.4 L11.7 5.4 L11.7 11" stroke-linecap="butt"/></g></svg>
<svg style="left:1527px;top:487px" width="17" height="17" viewBox="0 0 17 17"><g fill="none" stroke="#111" stroke-width="1.5" stroke-linecap="round"><line x1="1.6" y1="4.3" x2="14.3" y2="4.3"/><path d="M6.2 4.2 L6.2 2.8 Q6.2 1.75 7.2 1.75 L9.2 1.75 Q10.2 1.75 10.2 2.8 L10.2 4.2"/><path d="M2.75 6.8 L2.75 12.6 Q2.75 15.15 5.3 15.15 L10.7 15.15 Q13.25 15.15 13.25 12.6 L13.25 6.8"/><line x1="5.2" y1="7.9" x2="5.2" y2="12.5" stroke="#444"/><line x1="8" y1="7.9" x2="8" y2="12.5" stroke="#555"/><line x1="10.6" y1="7.9" x2="10.6" y2="12.5" stroke="#444"/></g></svg>
<div class="a" style="left:244px;top:188px;width:198px;height:20px;background:#f2f7fc"></div>
<div class="a" style="left:244px;top:208px;width:198px;height:20px;background:#f2f7fc"></div>
<div class="a" style="left:244px;top:228px;width:198px;height:20px;background:#ffffff"></div>
<div class="a" style="left:244px;top:248px;width:198px;height:20px;background:#f2f7fc"></div>
<div class="a" style="left:244px;top:268px;width:198px;height:20px;background:#f2f7fc"></div>
<div class="a" style="left:244px;top:288px;width:198px;height:20px;background:#ffffff"></div>
<div class="a" style="left:244px;top:308px;width:198px;height:20px;background:#f2f7fc"></div>
<div class="a" style="left:244px;top:328px;width:198px;height:20px;background:#f2f7fc"></div>
<div class="a" style="left:244px;top:348px;width:198px;height:20px;background:#ffffff"></div>
<div class="a" style="left:244px;top:368px;width:198px;height:20px;background:#ffffff"></div>
<div class="a" style="left:244px;top:388px;width:198px;height:20px;background:#f2f7fc"></div>
<div class="a" style="left:244px;top:408px;width:198px;height:20px;background:#ffffff"></div>
<div class="a" style="left:244px;top:428px;width:198px;height:20px;background:#ffffff"></div>
<div class="a" style="left:244px;top:448px;width:198px;height:20px;background:#f2f7fc"></div>
<div class="a" style="left:244px;top:468px;width:198px;height:20px;background:#f2f7fc"></div>
<div class="a" style="left:244px;top:488px;width:198px;height:20px;background:#ffffff"></div>
<div class="a" style="left:244px;top:508px;width:198px;height:20px;background:#ffffff"></div>
<div class="a" style="left:364px;top:188px;width:20px;height:20px;background:#bcc1c5"></div>
<div class="a" style="left:284px;top:228px;width:20px;height:20px;background:#9c9c9c"></div>
<div class="a" style="left:304px;top:228px;width:20px;height:20px;background:#d9d9d9"></div>
<div class="a" style="left:344px;top:228px;width:20px;height:20px;background:#d9d9d9"></div>
<div class="a" style="left:364px;top:228px;width:20px;height:20px;background:#222222"></div>
<div class="a" style="left:384px;top:228px;width:20px;height:20px;background:#d9d9d9"></div>
<div class="a" style="left:404px;top:228px;width:20px;height:20px;background:#222222"></div>
<div class="a" style="left:264px;top:288px;width:20px;height:20px;background:#9e9e9e"></div>
<div class="a" style="left:284px;top:288px;width:20px;height:20px;background:#f4f4f4"></div>
<div class="a" style="left:304px;top:288px;width:20px;height:20px;background:#b4b4b4"></div>
<div class="a" style="left:324px;top:288px;width:20px;height:20px;background:#a7a7a7"></div>
<div class="a" style="left:344px;top:288px;width:20px;height:20px;background:#d9d9d9"></div>
<div class="a" style="left:364px;top:448px;width:20px;height:20px;background:#c0c4c8"></div>
<div class="a" style="left:304px;top:488px;width:20px;height:20px;background:#ebebeb"></div>
<div class="a" style="left:324px;top:488px;width:20px;height:20px;background:#d6d6d6"></div>
<div class="a" style="left:364px;top:488px;width:20px;height:20px;background:#c8c8c8"></div>
<div class="a" style="left:384px;top:488px;width:20px;height:20px;background:#ebebeb"></div>
<div class="a" style="left:866px;top:336px;width:20px;height:17px;background:#d0d3d6"></div>
<div class="a" style="left:886px;top:336px;width:20px;height:17px;background:#4a4a4a"></div>
<div class="t" style="left:50.43px;top:533.00px;font-size:15px;color:#666;letter-spacing:0.416px;font-weight:normal;">395 total</div>
<svg style="left:1384px;top:534px" width="10" height="9" viewBox="0 0 10 9"><path d="M0.5 0 L2.2 0 L2.2 9 L0.5 9 Z M9 0 L9 9 L2.5 4.5 Z" fill="#1e8fff"/></svg>
<svg style="left:1410px;top:534px" width="8" height="9" viewBox="0 0 8 9"><path d="M5.5 1 L2 4.5 L5.5 8" fill="none" stroke="#1e8fff" stroke-width="1.8"/></svg>
<div class="t" style="left:1430.06px;top:533.30px;font-size:15px;color:#0a14d8;letter-spacing:0px;font-weight:bold;">1</div>
<div class="t" style="left:1448.75px;top:533.30px;font-size:15px;color:#4aa0ff;letter-spacing:0px;font-weight:normal;">2</div>
<div class="t" style="left:1467.43px;top:533.30px;font-size:15px;color:#3a96ff;letter-spacing:0px;font-weight:normal;">3</div>
<div class="t" style="left:1486.16px;top:533.30px;font-size:15px;color:#6ab4ff;letter-spacing:0px;font-weight:normal;">4</div>
<div class="t" style="left:1504.90px;top:533.30px;font-size:15px;color:#3a96ff;letter-spacing:0px;font-weight:normal;">5</div>
<svg style="left:1527px;top:534px" width="8" height="9" viewBox="0 0 8 9"><path d="M2 1 L5.5 4.5 L2 8" fill="none" stroke="#1e8fff" stroke-width="1.8"/></svg>
<svg style="left:1552px;top:534px" width="10" height="9" viewBox="0 0 10 9"><path d="M0.5 0 L0.5 9 L7 4.5 Z M7.3 0 L9 0 L9 9 L7.3 9 Z" fill="#1e8fff"/></svg>
<div class="t" style="left:1629.56px;top:178.35px;font-size:14px;color:#555;letter-spacing:0.252px;font-weight:normal;">See More</div>
<div class="t" style="left:1654.25px;top:206.25px;font-size:14px;color:#6f9ae8;letter-spacing:0.029px;font-weight:normal;">Manage service credentials</div>
<div class="t" style="left:1654.25px;top:243.15px;font-size:14px;color:#6f9ae8;letter-spacing:0.078px;font-weight:normal;">Manage hardware auth devices</div>
<div class="t" style="left:1654.25px;top:279.75px;font-size:14px;color:#6f9ae8;letter-spacing:0.085px;font-weight:normal;">Deprovisioned devices</div>
</body></html>
